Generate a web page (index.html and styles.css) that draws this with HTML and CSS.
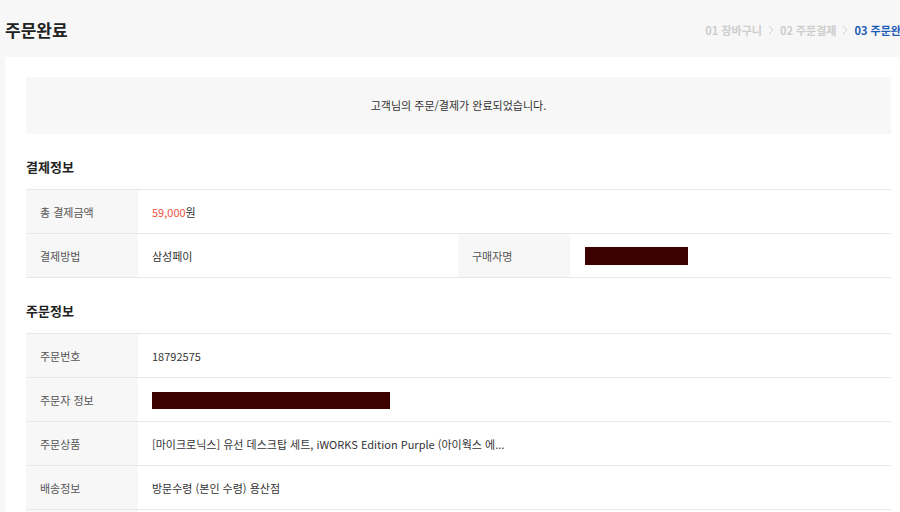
FILE: index.html
```html
<!DOCTYPE html>
<html lang="ko">
<head>
  <meta charset="utf-8">
  <title>주문완료</title>
  <link rel="stylesheet" href="styles.css">
</head>
<body>
  <div class="wrap">

    <!-- Header -->
    <div class="head">
      <h1>주문완료</h1>
      <ol class="steps">
        <li>01 장바구니</li>
        <li class="arrow"><svg width="6" height="10" viewBox="0 0 6 10"><path d="M1 1l4 4-4 4" fill="none" stroke="#cfcfcf" stroke-width="1"/></svg></li>
        <li>02 주문결제</li>
        <li class="arrow"><svg width="6" height="10" viewBox="0 0 6 10"><path d="M1 1l4 4-4 4" fill="none" stroke="#cfcfcf" stroke-width="1"/></svg></li>
        <li class="on">03 주문완료</li>
      </ol>
    </div>

    <div class="panel">
      <div class="notice">고객님의 주문/결제가 완료되었습니다.</div>

      <!-- 결제정보 -->
      <h2>결제정보</h2>
      <table class="info">
        <colgroup>
          <col class="c-th"><col class="c-td"><col class="c-th"><col>
        </colgroup>
        <tr>
          <th>총 결제금액</th>
          <td colspan="3"><span class="price">59,000</span>원</td>
        </tr>
        <tr>
          <th>결제방법</th>
          <td>삼성페이</td>
          <th>구매자명</th>
          <td><span class="mask mask-name"></span></td>
        </tr>
      </table>

      <!-- 주문정보 -->
      <h2>주문정보</h2>
      <table class="info">
        <colgroup>
          <col class="c-th"><col>
        </colgroup>
        <tr>
          <th>주문번호</th>
          <td>18792575</td>
        </tr>
        <tr>
          <th>주문자 정보</th>
          <td><span class="mask mask-user"></span></td>
        </tr>
        <tr>
          <th>주문상품</th>
          <td>[마이크로닉스] 유선 데스크탑 세트, iWORKS Edition Purple (아이웍스 에...</td>
        </tr>
        <tr>
          <th>배송정보</th>
          <td>방문수령 (본인 수령) 용산점</td>
        </tr>
        <tr>
          <th></th>
          <td></td>
        </tr>
      </table>
    </div>

  </div>
</body>
</html>
```

FILE: styles.css
```css
html, body {
  overflow: hidden;
}
body {
  margin: 0;
  background: #f7f7f7;
  font-family: "Noto Sans CJK KR", "Noto Sans", sans-serif;
  font-size: 11px;
  color: #333;
}
.wrap {
  width: 912px;
  margin-left: 5px;
}
.head {
  height: 57px;
  display: flex;
  justify-content: space-between;
  align-items: center;
}
.head h1 {
  margin: 2px 0 0;
  font-size: 17px;
  font-weight: bold;
  color: #222;
}
.steps {
  list-style: none;
  margin: 3px 6px 0 0;
  padding: 0;
  display: flex;
  align-items: center;
  gap: 6px;
  font-size: 11px;
  font-weight: bold;
  color: #cdcdcd;
}
.steps .arrow {
  display: flex;
}
.steps .on {
  color: #1d5bb8;
}
.panel {
  width: 865px;
  background: #fff;
  padding: 20px 21px 40px;
}
.notice {
  height: 57px;
  line-height: 57px;
  background: #f7f7f7;
  text-align: center;
  color: #333;
}
h2 {
  margin: 0;
  padding: 23px 0 13px;
  font-size: 13px;
  line-height: 19px;
  color: #222;
}
.info {
  width: 100%;
  border-collapse: collapse;
  table-layout: fixed;
  border-top: 1px solid #e8e8e8;
}
.c-th {
  width: 112px;
}
.c-td {
  width: 320px;
}
.info th, .info td {
  height: 43px;
  padding: 0 14px;
  border-bottom: 1px solid #e8e8e8;
  text-align: left;
  font-weight: normal;
  white-space: nowrap;
  overflow: hidden;
}
.info th {
  background: #f7f7f7;
  color: #555;
}
.price {
  color: #f0523f;
}
.mask {
  display: inline-block;
  vertical-align: middle;
  background: #3d0000;
}
.mask-name {
  width: 103px;
  height: 18px;
  margin-left: 1px;
}
.mask-user {
  width: 238px;
  height: 17px;
}
```
